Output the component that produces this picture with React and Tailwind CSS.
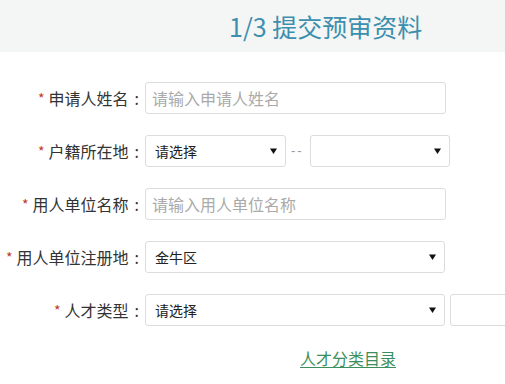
import React from 'react';

const font = { fontFamily: '"Noto Sans CJK SC", "Noto Sans", sans-serif' };

const Label = ({ text }) => (
  <div className="w-[145px] shrink-0 flex items-center justify-end text-[16px] text-[#333] whitespace-nowrap">
    <span className="text-[#c0392b] text-[14px] mr-[4px]">*</span>
    <span>{text}</span>
    <span className="ml-[6px] mr-[6px]">:</span>
  </div>
);

const TextInput = ({ placeholder }) => (
  <input
    type="text"
    placeholder={placeholder}
    className="w-[301px] h-[32px] border border-[#dcdcdc] rounded-[3px] px-[6px] text-[16px] text-[#333] placeholder:text-[#aaa] outline-none bg-white"
  />
);

const Arrow = () => (
  <svg width="7" height="6" viewBox="0 0 7 6">
    <path d="M0 0.5 H7 L3.5 6 Z" fill="#111" />
  </svg>
);

const FakeSelect = ({ value, width }) => (
  <div className={`${width} h-[32px] shrink-0 border border-[#dcdcdc] rounded-[3px] flex items-center justify-between pl-[9px] pr-[8px] bg-white`}>
    <span className="text-[14px] text-[#222]">{value}</span>
    <Arrow />
  </div>
);

export default function App() {
  return (
    <div className="w-[505px] h-[384px] bg-white overflow-hidden" style={font}>
      <div className="h-[52px] bg-[#f4f5f5] flex items-center pl-[229px]">
        <h1 className="text-[25px] text-[#3d8fae] leading-none">1/3 提交预审资料</h1>
      </div>

      <div className="mt-[30px] flex flex-col gap-[21px]">
        <div className="flex items-center">
          <Label text="申请人姓名" />
          <TextInput placeholder="请输入申请人姓名" />
        </div>

        <div className="flex items-center">
          <Label text="户籍所在地" />
          <FakeSelect value="请选择" width="w-[141px]" />
          <span className="ml-[5px] mr-[6px] text-[13px] text-[#999] tracking-[2px]" style={{ fontFamily: '"Liberation Sans", sans-serif' }}>--</span>
          <FakeSelect value="" width="w-[140px]" />
        </div>

        <div className="flex items-center">
          <Label text="用人单位名称" />
          <TextInput placeholder="请输入用人单位名称" />
        </div>

        <div className="flex items-center">
          <Label text="用人单位注册地" />
          <FakeSelect value="金牛区" width="w-[300px]" />
        </div>

        <div className="flex items-center">
          <Label text="人才类型" />
          <FakeSelect value="请选择" width="w-[300px]" />
          <div className="ml-[5px] w-[120px] h-[32px] shrink-0 border border-[#dcdcdc] rounded-[3px] bg-white" />
        </div>
      </div>

      <div className="mt-[20px] pl-[300px]">
        <a href="#" className="text-[16px] text-[#3b8f5e] underline underline-offset-2">人才分类目录</a>
      </div>
    </div>
  );
}
